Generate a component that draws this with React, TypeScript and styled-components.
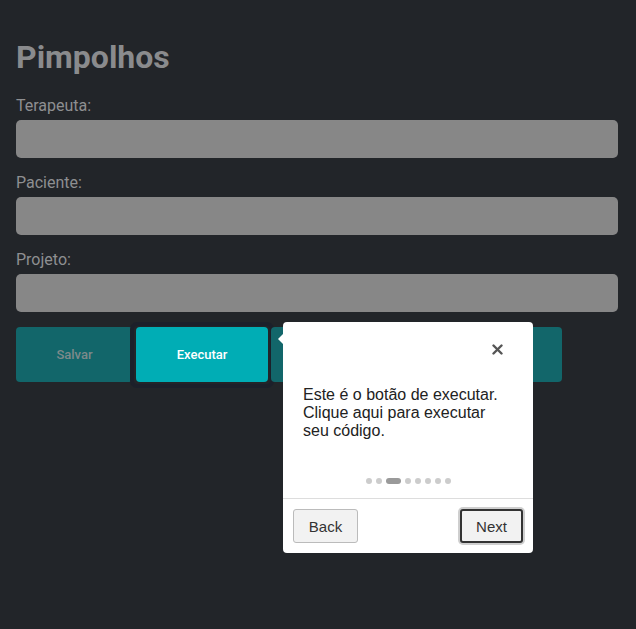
import React from 'react';
import styled, { createGlobalStyle } from 'styled-components';

const GlobalStyle = createGlobalStyle`
  html, body {
    margin: 0;
    padding: 0;
    background: #222529;
  }
  body {
    font-family: Roboto, "Liberation Sans", sans-serif;
  }
`;

const Page = styled.div`
  position: relative;
  width: 636px;
  height: 629px;
  box-sizing: border-box;
  padding: 37px 18px 0 16px;
  background: #222529;
`;

const Title = styled.h1`
  margin: 0 0 19px;
  font-size: 32px;
  line-height: 40px;
  font-weight: 700;
  color: #8a8b8d;
`;

const Field = styled.div`
  display: flex;
  flex-direction: column;
  margin-bottom: 15px;
`;

const Label = styled.label`
  font-size: 16px;
  line-height: 20px;
  color: #8e8f91;
  margin-bottom: 4px;
`;

const Input = styled.div`
  height: 38px;
  border-radius: 5px;
  background: #878787;
`;

const ButtonRow = styled.div`
  display: flex;
  gap: 3px;
  width: 546px;
`;

const ActionButton = styled.div<{ $width: number; $active?: boolean }>`
  flex: 0 0 ${(p) => p.$width}px;
  height: 55px;
  display: flex;
  align-items: center;
  justify-content: center;
  border-radius: 4px;
  font-size: 13px;
  font-weight: 500;
  background: ${(p) => (p.$active ? '#00adb5' : '#12666a')};
  color: ${(p) => (p.$active ? '#ffffff' : '#7d8a8b')};
  position: relative;
`;

const Spotlight = styled.div`
  position: absolute;
  left: -6px;
  right: -6px;
  top: -5px;
  bottom: -6px;
  border: 4px solid #1c202a;
  border-radius: 7px;
  pointer-events: none;
`;

const Popover = styled.div`
  position: absolute;
  left: 283px;
  top: 322px;
  width: 250px;
  height: 231px;
  background: #ffffff;
  border-radius: 4px;
  font-family: "Liberation Sans", Arial, sans-serif;
  display: flex;
  flex-direction: column;
`;

const Arrow = styled.div`
  position: absolute;
  left: -5px;
  top: 11px;
  width: 0;
  height: 0;
  border-top: 6px solid transparent;
  border-bottom: 6px solid transparent;
  border-right: 6px solid #ffffff;
`;

const Close = styled.button`
  position: absolute;
  right: 29px;
  top: 20px;
  border: none;
  background: none;
  padding: 0;
  width: 14px;
  height: 14px;
  display: flex;
  align-items: center;
  justify-content: center;
  cursor: pointer;
`;

const Body = styled.div`
  padding: 64px 20px 0 20px;
  font-size: 16px;
  line-height: 18px;
  color: #222222;
  flex: 1;
`;

const Dots = styled.div`
  display: flex;
  justify-content: center;
  align-items: center;
  gap: 4px;
  padding-bottom: 14px;
`;

const Dot = styled.span<{ $active?: boolean }>`
  width: ${(p) => (p.$active ? 15 : 6)}px;
  height: 6px;
  border-radius: 3px;
  background: ${(p) => (p.$active ? '#9a9a9a' : '#cccccc')};
`;

const Footer = styled.div`
  border-top: 1px solid #dddddd;
  display: flex;
  justify-content: space-between;
  align-items: center;
  padding: 10px;
`;

const NavButton = styled.button<{ $focused?: boolean }>`
  box-sizing: border-box;
  height: 34px;
  width: ${(p) => (p.$focused ? 63 : 65)}px;
  padding: 0;
  font-family: "Liberation Sans", Arial, sans-serif;
  font-size: 15px;
  color: #333333;
  background: #f2f2f2;
  border-radius: 3px;
  border: ${(p) => (p.$focused ? '2px solid #333333' : '1px solid #bbbbbb')};
  box-shadow: ${(p) => (p.$focused ? '0 0 0 2px #cfcfcf' : 'none')};
`;

const fields = ['Terapeuta:', 'Paciente:', 'Projeto:'];

const App: React.FC = () => {
  return (
    <>
      <GlobalStyle />
      <Page>
        <Title>Pimpolhos</Title>
        {fields.map((f) => (
          <Field key={f}>
            <Label>{f}</Label>
            <Input />
          </Field>
        ))}
        <ButtonRow>
          <ActionButton $width={117}>Salvar</ActionButton>
          <ActionButton $width={132} $active>
            Executar
            <Spotlight />
          </ActionButton>
          <ActionButton $width={291} />
        </ButtonRow>
        <Popover>
          <Arrow />
          <Close aria-label="Fechar">
            <svg width="11" height="11" viewBox="0 0 11 11">
              <path d="M1.5 1.5L9.5 9.5M9.5 1.5L1.5 9.5" stroke="#555" strokeWidth="2.4" strokeLinecap="round" />
            </svg>
          </Close>
          <Body>
            Este é o botão de executar.
            <br />
            Clique aqui para executar
            <br />
            seu código.
          </Body>
          <Dots>
            {[0, 1, 2, 3, 4, 5, 6, 7].map((i) => (
              <Dot key={i} $active={i === 2} />
            ))}
          </Dots>
          <Footer>
            <NavButton>Back</NavButton>
            <NavButton $focused>Next</NavButton>
          </Footer>
        </Popover>
      </Page>
    </>
  );
};

export default App;
